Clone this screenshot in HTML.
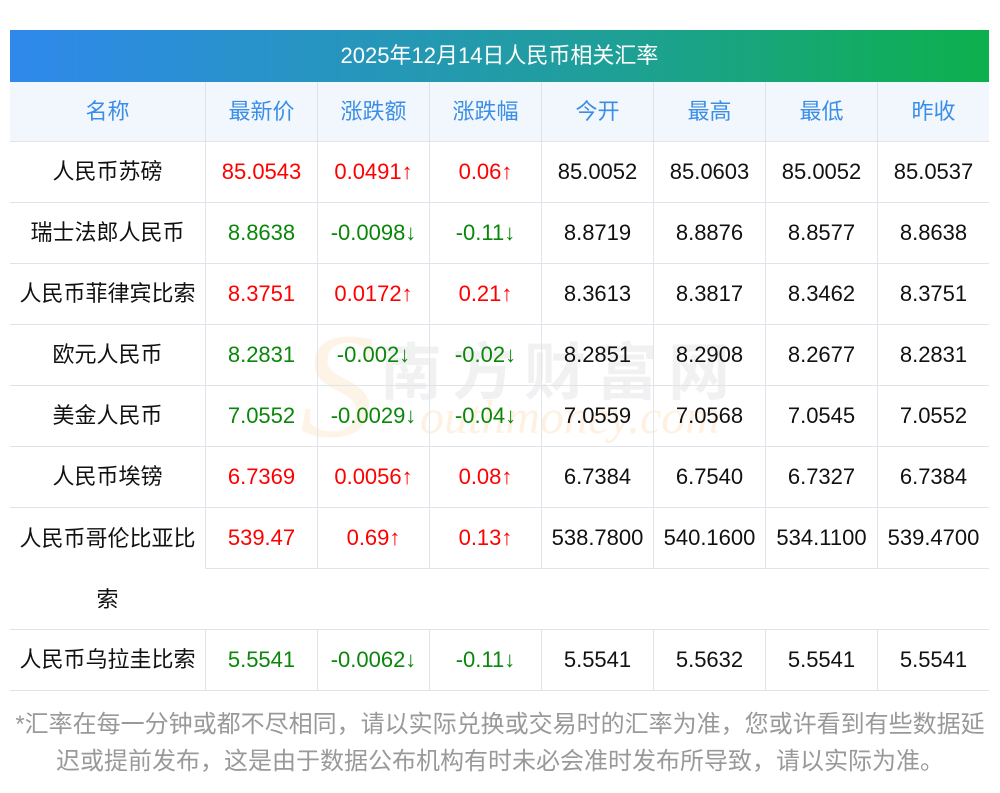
<!DOCTYPE html>
<html><head><meta charset="utf-8"><style>
*{margin:0;padding:0;box-sizing:border-box}
body{width:1000px;height:793px;background:#fff;font-family:"Liberation Sans","Noto Sans CJK SC",sans-serif;position:relative;overflow:hidden}
.title{position:absolute;left:10px;top:30px;width:979px;height:52px;background:linear-gradient(90deg,#2f89ec,#1f9f9a 60%,#0db04c);color:#fff;font-size:22px;line-height:52px;text-align:center}
.tbl{position:absolute;left:10px;top:82px;width:979px}
.r{display:flex;height:61px;border-bottom:1px solid #e0e3ea}
.c{width:112px;flex-shrink:0;border-left:1px solid #e0e3ea;text-align:center;line-height:60px;font-size:22px;color:#111;white-space:nowrap}
.r>.c:first-child{width:195px;border-left:none}
.h{background:#f2f7fe;height:60px}
.h .c{color:#3a8ee6}
.red{color:#f00!important}.grn{color:#0a870a!important}
.note{position:absolute;left:0;top:706px;width:1000px;text-align:center;color:#999;font-size:24px;line-height:37px;white-space:nowrap}
.wm{position:absolute;left:380px;top:322px;font-size:62px;color:rgba(190,190,190,.22);font-weight:bold;letter-spacing:10px}
.wm2{position:absolute;left:420px;top:390px;font-size:48px;font-style:italic;color:rgba(250,200,140,.25);font-family:"Liberation Serif",serif}
.wmS{position:absolute;left:300px;top:300px;font-size:150px;font-style:italic;color:rgba(250,190,120,.18);font-family:"Liberation Serif",serif}
</style></head><body>
<div class="title">2025年12月14日人民币相关汇率</div>
<div class="wmS">S</div>
<div class="wm">南方财富网</div>
<div class="wm2">outhmoney.com</div>
<div class="tbl">
<div class="r h"><div class="c">名称</div><div class="c">最新价</div><div class="c">涨跌额</div><div class="c">涨跌幅</div><div class="c">今开</div><div class="c">最高</div><div class="c">最低</div><div class="c">昨收</div></div>
<div class="r"><div class="c">人民币苏磅</div><div class="c red">85.0543</div><div class="c red">0.0491↑</div><div class="c red">0.06↑</div><div class="c">85.0052</div><div class="c">85.0603</div><div class="c">85.0052</div><div class="c">85.0537</div></div>
<div class="r"><div class="c">瑞士法郎人民币</div><div class="c grn">8.8638</div><div class="c grn">-0.0098↓</div><div class="c grn">-0.11↓</div><div class="c">8.8719</div><div class="c">8.8876</div><div class="c">8.8577</div><div class="c">8.8638</div></div>
<div class="r"><div class="c">人民币菲律宾比索</div><div class="c red">8.3751</div><div class="c red">0.0172↑</div><div class="c red">0.21↑</div><div class="c">8.3613</div><div class="c">8.3817</div><div class="c">8.3462</div><div class="c">8.3751</div></div>
<div class="r"><div class="c">欧元人民币</div><div class="c grn">8.2831</div><div class="c grn">-0.002↓</div><div class="c grn">-0.02↓</div><div class="c">8.2851</div><div class="c">8.2908</div><div class="c">8.2677</div><div class="c">8.2831</div></div>
<div class="r"><div class="c">美金人民币</div><div class="c grn">7.0552</div><div class="c grn">-0.0029↓</div><div class="c grn">-0.04↓</div><div class="c">7.0559</div><div class="c">7.0568</div><div class="c">7.0545</div><div class="c">7.0552</div></div>
<div class="r"><div class="c">人民币埃镑</div><div class="c red">6.7369</div><div class="c red">0.0056↑</div><div class="c red">0.08↑</div><div class="c">6.7384</div><div class="c">6.7540</div><div class="c">6.7327</div><div class="c">6.7384</div></div>
<div class="r" style="height:122px;align-items:flex-start"><div class="c" style="height:121px;line-height:61px">人民币哥伦比亚比<br>索</div><div style="display:flex;flex-shrink:0;width:784px;border-bottom:1px solid #e0e3ea;height:61px"><div class="c red">539.47</div><div class="c red">0.69↑</div><div class="c red">0.13↑</div><div class="c">538.7800</div><div class="c">540.1600</div><div class="c">534.1100</div><div class="c">539.4700</div></div></div>
<div class="r"><div class="c">人民币乌拉圭比索</div><div class="c grn">5.5541</div><div class="c grn">-0.0062↓</div><div class="c grn">-0.11↓</div><div class="c">5.5541</div><div class="c">5.5632</div><div class="c">5.5541</div><div class="c">5.5541</div></div>
</div>
<div class="note">*汇率在每一分钟或都不尽相同，请以实际兑换或交易时的汇率为准，您或许看到有些数据延<br>迟或提前发布，这是由于数据公布机构有时未必会准时发布所导致，请以实际为准。</div>
</body></html>
